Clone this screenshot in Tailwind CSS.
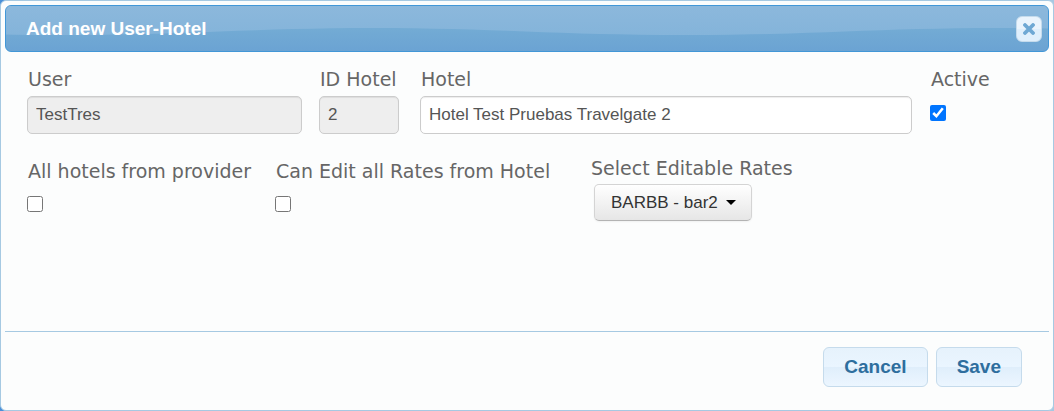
<!DOCTYPE html>
<html lang="en">
<head>
<meta charset="utf-8">
<meta name="viewport" content="width=device-width, initial-scale=1">
<title>Add new User-Hotel</title>
<script src="https://cdn.jsdelivr.net/npm/@tailwindcss/browser@4"></script>
</head>
<body class="bg-[linear-gradient(to_right,#4a90d9,#a6c9e2)] font-['Liberation_Sans',sans-serif] text-[17px] text-[#555555]">
<div role="dialog" aria-labelledby="dialog-title" class="flex min-h-screen flex-col rounded-md border border-[#a6c9e2] bg-[#fcfdfd] p-1">
  <header class="relative flex h-[47px] items-center justify-between overflow-hidden rounded-md border border-[#4297d7] bg-[linear-gradient(#73abd4_50%,#6ba3d3)] pr-1.5 pl-5">
    <svg class="absolute inset-0 h-full w-full" aria-hidden="true">
      <defs>
        <linearGradient id="gloss" x1="0" y1="0" x2="0" y2="1"><stop offset="0" stop-color="#8cb8dc"/><stop offset="1" stop-color="#84b4da"/></linearGradient>
        <pattern id="wave" x="54" width="625" height="46" patternUnits="userSpaceOnUse">
          <path d="M0 0H625V29C500 29 430 22 313 22S125 29 0 29Z" fill="url(#gloss)"/>
        </pattern>
      </defs>
      <rect width="100%" height="46" fill="url(#wave)"/>
    </svg>
    <h1 id="dialog-title" class="relative text-[19px] leading-6 font-bold text-white">Add new User-Hotel</h1>
    <button type="button" aria-label="Close" class="relative flex size-[26px] items-center justify-center rounded-md border border-[#c5dbec] bg-[linear-gradient(#eaf4fd_50%,#dfeffc_50%)]">
      <svg class="size-3" viewBox="0 0 12 12" aria-hidden="true"><path d="M2 2L10 10M10 2L2 10" stroke="#6ea8d4" stroke-width="3.8" stroke-linecap="round"/></svg>
    </button>
  </header>

  <form id="user-hotel" class="grow px-[22px] pt-[15px]">
    <div class="flex items-start">
      <div class="flex w-[275px] flex-col">
        <label for="user" class="pl-px font-['DejaVu_Sans',sans-serif] text-[19px] leading-6 text-[#666666]">User</label>
        <input id="user" type="text" value="TestTres" readonly class="mt-[5px] h-[38px] w-full rounded-[5px] border border-[#cccccc] bg-[#eeeeee] px-2 shadow-[inset_0_1px_1px_rgba(0,0,0,0.075)]">
      </div>
      <div class="ml-[17px] flex w-20 flex-col">
        <label for="hotel-id" class="pl-px font-['DejaVu_Sans',sans-serif] text-[19px] leading-6 whitespace-nowrap text-[#666666]">ID Hotel</label>
        <input id="hotel-id" type="text" value="2" readonly class="mt-[5px] h-[38px] w-full rounded-[5px] border border-[#cccccc] bg-[#eeeeee] px-2 shadow-[inset_0_1px_1px_rgba(0,0,0,0.075)]">
      </div>
      <div class="ml-[21px] flex grow flex-col">
        <label for="hotel" class="pl-px font-['DejaVu_Sans',sans-serif] text-[19px] leading-6 text-[#666666]">Hotel</label>
        <input id="hotel" type="text" value="Hotel Test Pruebas Travelgate 2" class="mt-[5px] h-[38px] w-full rounded-[5px] border border-[#cccccc] bg-white px-2 shadow-[inset_0_1px_1px_rgba(0,0,0,0.075)]">
      </div>
      <div class="ml-[18px] flex w-[97px] flex-col">
        <label for="active" class="pl-px font-['DejaVu_Sans',sans-serif] text-[19px] leading-6 text-[#666666]">Active</label>
        <input id="active" type="checkbox" checked class="mt-[14px] size-4 accent-[#0075ff]">
      </div>
    </div>
    <div class="mt-[22px] flex items-start">
      <div class="flex w-[248px] flex-col pt-[3px]">
        <label for="all-hotels" class="pl-px font-['DejaVu_Sans',sans-serif] text-[19px] leading-6 whitespace-nowrap text-[#666666]">All hotels from provider</label>
        <input id="all-hotels" type="checkbox" class="mt-[13px] size-4">
      </div>
      <div class="flex w-[315px] flex-col pt-[3px]">
        <label for="edit-rates" class="pl-px font-['DejaVu_Sans',sans-serif] text-[19px] leading-6 whitespace-nowrap text-[#666666]">Can Edit all Rates from Hotel</label>
        <input id="edit-rates" type="checkbox" class="mt-[13px] size-4">
      </div>
      <div class="flex flex-col">
        <label for="rates" class="pl-px font-['DejaVu_Sans',sans-serif] text-[19px] leading-6 whitespace-nowrap text-[#666666]">Select Editable Rates</label>
        <div class="relative mt-1 ml-1 w-[158px]">
          <select id="rates" class="h-[37px] w-full appearance-none rounded-[5px] border border-[#d4d4d4] border-b-[#b3b3b3] bg-[linear-gradient(#ffffff,#e6e6e6)] px-4 text-[#333333] shadow-[0_1px_2px_rgba(0,0,0,0.05)]">
            <option>BARBB - bar2</option>
          </select>
          <svg class="pointer-events-none absolute top-4 right-4 h-[5px] w-[10px]" viewBox="0 0 10 5" aria-hidden="true"><path d="M0 0H10L5 5Z" fill="#000"/></svg>
        </div>
      </div>
    </div>
  </form>

  <footer class="flex justify-end gap-2 border-t border-[#a6c9e2] pt-[15px] pr-[27px] pb-[19px]">
    <button type="button" class="h-10 rounded-md border border-[#c5dbec] bg-[linear-gradient(#e6f2fc,#eaf5ff_50%,#dfeefb_50%,#ecf6ff)] px-5 text-[19px] leading-6 font-bold text-[#2e6e9e]">Cancel</button>
    <button type="submit" form="user-hotel" class="h-10 rounded-md border border-[#c5dbec] bg-[linear-gradient(#e6f2fc,#eaf5ff_50%,#dfeefb_50%,#ecf6ff)] px-5 text-[19px] leading-6 font-bold text-[#2e6e9e]">Save</button>
  </footer>
</div>
</body>
</html>
